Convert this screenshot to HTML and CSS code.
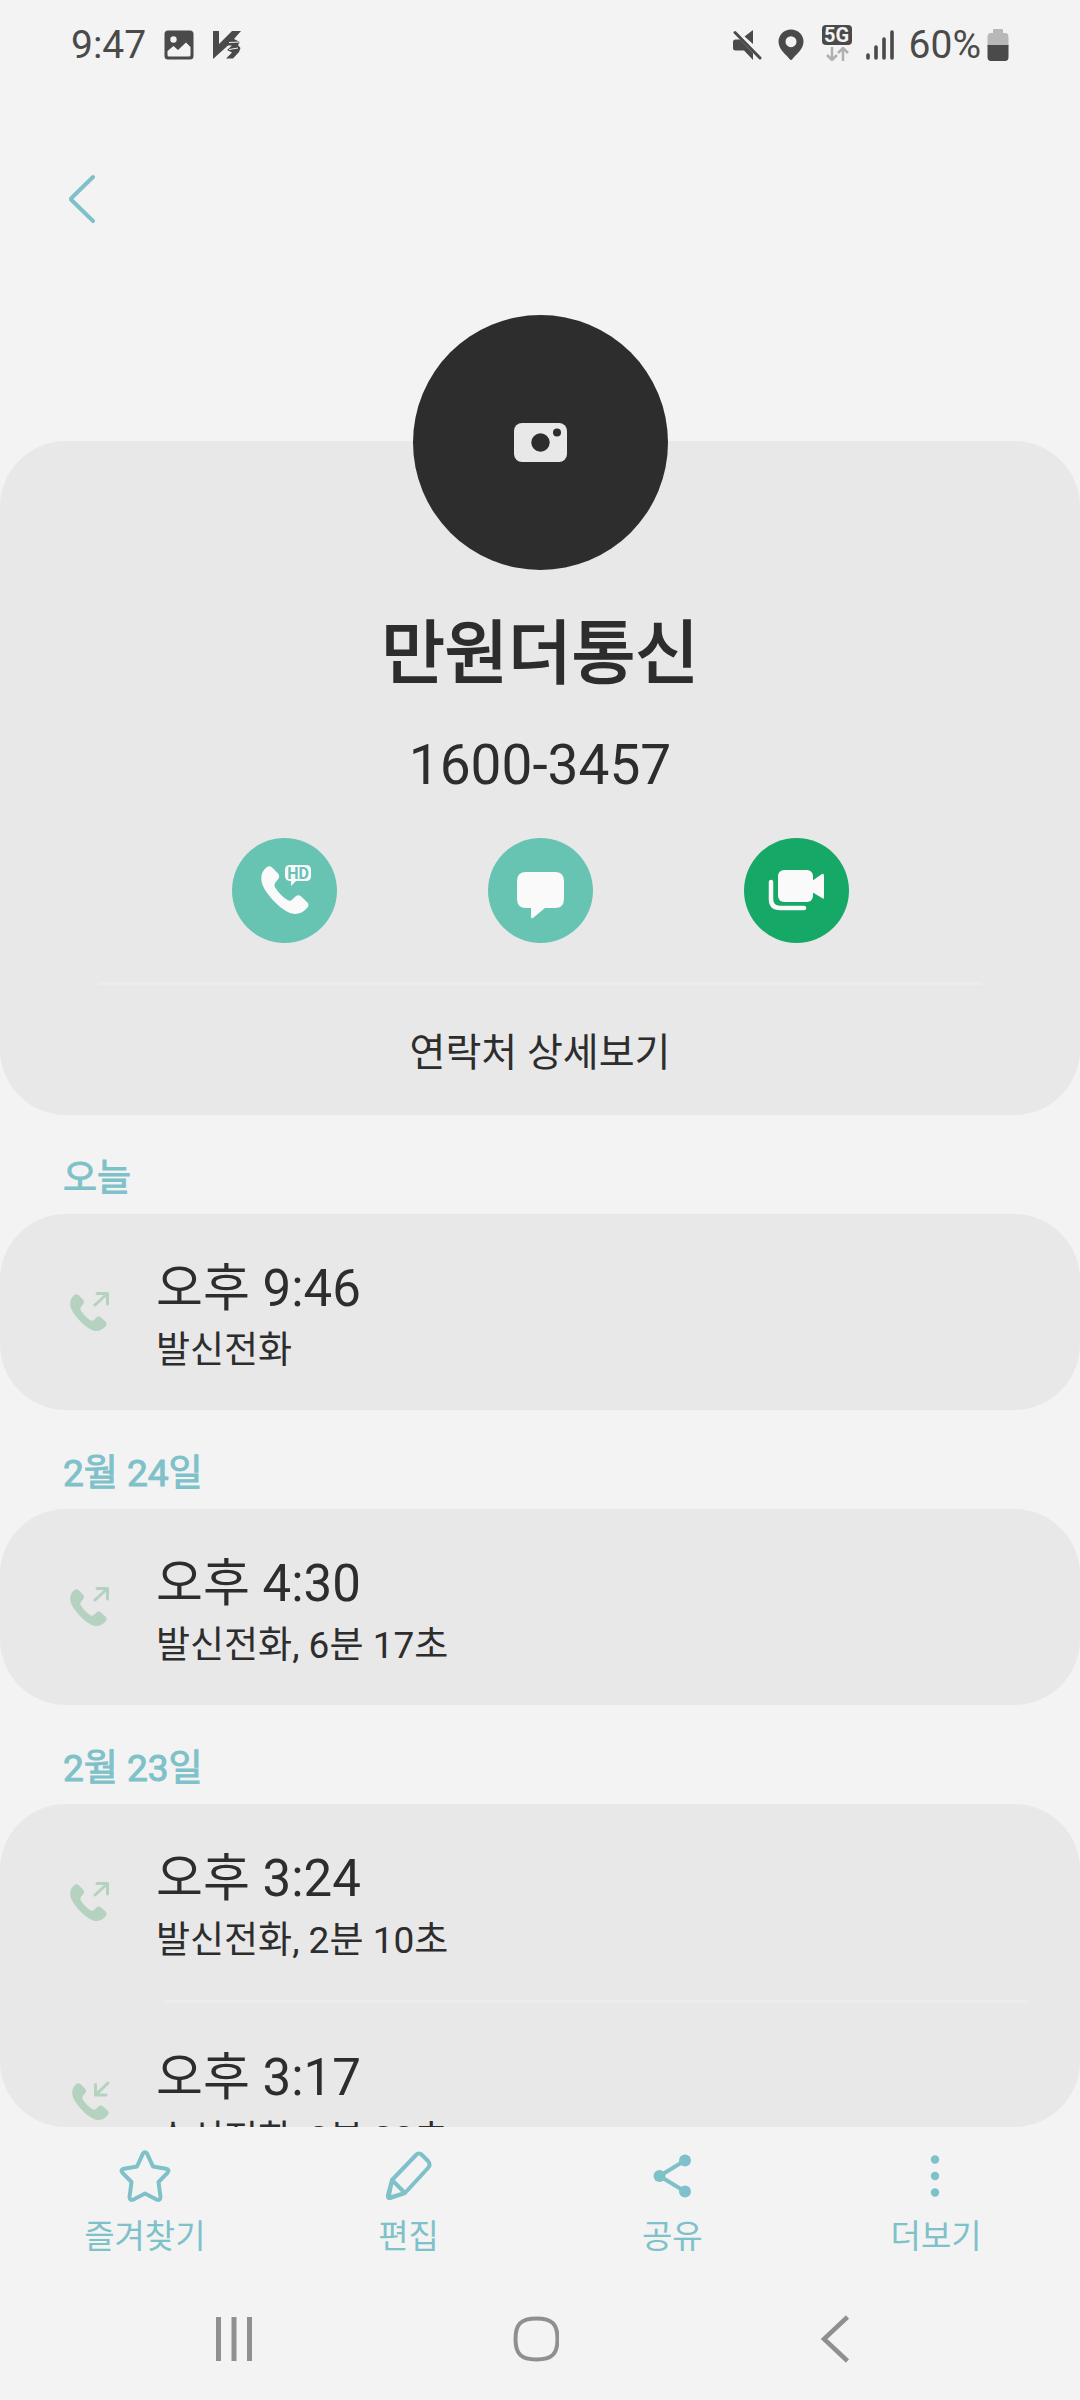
FILE: index.html
```html
<!DOCTYPE html>
<html lang="ko">
<head>
    <meta charset="UTF-8">
    <meta name="viewport" content="width=device-width, initial-scale=1.0">
    <title>통화 기록</title>
    <link rel="stylesheet" href="styles.css">
</head>
<body>

<!-- 공용 아이콘 -->
<svg class="icon-defs" aria-hidden="true">
    <symbol id="icon-handset" viewBox="0 0 38 38">
        <path d="M4.500 1C6 0 7.500 0 9 1.300L13.500 6C14.800 7.500 14.600 9 13.600 10.300L11.300 13.200C10.300 14.600 10.500 15.800 11.500 17.500C13.800 21.300 17.500 25 21 27C22.300 27.700 23.600 27.600 24.800 26.500L27.500 24C28.800 22.900 30.300 22.900 31.600 24L36.600 28.600C37.900 30 37.800 31.500 36.800 32.800C33.500 37 29 38.600 24.500 37.700C17 36 4 23 1 14.500C-.8 9 .5 4 4.500 1Z" fill="currentColor"/>
    </symbol>
    <symbol id="icon-outgoing" viewBox="0 0 40 40">
        <use href="#icon-handset" x="0" y="2" width="37" height="37"/>
        <path d="M25 13L37 2M27 1.500H37.500V12" fill="none" stroke="currentColor" stroke-width="3" stroke-linecap="round" stroke-linejoin="round"/>
    </symbol>
    <symbol id="icon-incoming" viewBox="0 0 40 40">
        <use href="#icon-handset" x="2" y="2" width="37" height="37"/>
        <path d="M38 2L26 13.500M25.500 3.500V14H36" fill="none" stroke="currentColor" stroke-width="3" stroke-linecap="round" stroke-linejoin="round"/>
    </symbol>
</svg>

<div class="screen">

    <!-- 상태 표시줄 -->
    <div class="status-bar">
        <div class="status-left">
            <span>9:47</span>
            <svg width="30" height="30" viewBox="0 0 30 30">
                <path fill="#4a4a4a" fill-rule="evenodd" d="M4 .5H26Q29.500 .5 29.500 4V26Q29.500 29.500 26 29.500H4Q.5 29.500 .5 26V4Q.5 .5 4 .5ZM9.500 6.300A3.200 3.200 0 1 0 9.500 12.700A3.200 3.200 0 1 0 9.500 6.300ZM3.500 21V25Q3.500 26.500 5 26.500H25Q26.500 26.500 26.500 25V17L22 12.500L14 20L9.500 16Z"/>
            </svg>
            <svg width="30" height="30" viewBox="0 0 30 30">
                <path fill="#4a4a4a" d="M1 1H7V14L20 1H29L22 9L28 12L26 15L28.500 18L27 22L21 28.500H14L20 22.500L15 20L20 15.500H16L1 29Z"/>
                <path d="M17 12.500L28 12M17 19.500L26 18" stroke="#f3f3f3" stroke-width="1"/>
            </svg>
        </div>
        <div class="status-right">
            <svg width="30" height="30" viewBox="0 0 30 30">
                <path fill="#4a4a4a" d="M1 12Q1 9.500 3.500 9.500H8L21 23V30L12 20.500H3.500Q1 20.500 1 18ZM21 0V14L12.500 6.500Z"/>
                <path d="M3 2.500L28 28" stroke="#4a4a4a" stroke-width="3" stroke-linecap="round"/>
            </svg>
            <svg class="status-pin" width="26" height="32" viewBox="0 0 26 32">
                <path fill="#4a4a4a" fill-rule="evenodd" d="M13 .5C6 .5 .5 6 .5 12.500C.5 21 9 26 11.500 30Q13 32 14.500 30C17 26 25.500 21 25.500 12.500C25.500 6 20 .5 13 .5ZM13 7.200A5.500 5.500 0 1 1 13 18.200A5.500 5.500 0 1 1 13 7.200Z"/>
            </svg>
            <div class="network">
                <span class="network-type">5G</span>
                <svg width="24" height="14" viewBox="0 0 24 14">
                    <path d="M7 0V12M2 8L7 13L12 8M18 14V2M13 6L18 1L23 6" fill="none" stroke="#b0b0b0" stroke-width="2.500"/>
                </svg>
            </div>
            <svg class="status-signal" width="28" height="30" viewBox="0 0 28 30">
                <path d="M2 25V28M10 17V28M18 9V28M26 2V28" stroke="#4a4a4a" stroke-width="3.600" stroke-linecap="round"/>
            </svg>
            <span>60%</span>
            <svg class="status-battery" width="22" height="34" viewBox="0 0 22 34">
                <path fill="#b8b8b8" d="M6 5V2Q6 1 7 1H15Q16 1 16 2V5H18Q21.500 5 21.500 9V18H.5V9Q.5 5 4 5Z"/>
                <path fill="#4a4a4a" d="M.5 17H21.500V29Q21.500 33 18 33H4Q.5 33 .5 29Z"/>
            </svg>
        </div>
    </div>

    <header class="app-bar">
        <button class="back-btn" type="button" aria-label="뒤로">
            <svg width="28" height="50" viewBox="0 0 28 50">
                <path d="M25 3L3.500 24Q2.500 25 3.500 26L25 47" fill="none" stroke="currentColor" stroke-width="4" stroke-linecap="round"/>
            </svg>
        </button>
    </header>

    <main class="content">

        <!-- 연락처 카드 -->
        <section class="card contact-card">
            <button class="avatar" type="button" aria-label="사진 추가">
                <svg width="53" height="39" viewBox="0 0 53 39">
                    <rect width="53" height="39" rx="8" fill="#e8e8e8"/>
                    <circle cx="26.500" cy="19.500" r="9.200" fill="#2d2d2d"/>
                    <circle cx="43" cy="9.500" r="4" fill="#2d2d2d"/>
                </svg>
            </button>
            <h1 class="contact-name">만원더통신</h1>
            <p class="contact-number">1600-3457</p>
            <div class="contact-actions">
                <button class="action-btn" type="button" aria-label="HD 전화">
                    <svg width="105" height="105" viewBox="0 0 105 105">
                        <use href="#icon-handset" x="29" y="28" width="48" height="48"/>
                        <path fill="currentColor" d="M58 27H74Q79 27 79 32V38Q79 43 74 43H64L59 48V43Q53 43 53 38V32Q53 27 58 27Z"/>
                        <text class="hd-label" x="66" y="41" text-anchor="middle">HD</text>
                    </svg>
                </button>
                <button class="action-btn" type="button" aria-label="메시지">
                    <svg width="105" height="105" viewBox="0 0 105 105">
                        <path fill="currentColor" d="M38 34H67Q76 34 76 43V61Q76 70 67 70H57L45 80Q43 81 43 79V70H38Q29 70 29 61V43Q29 34 38 34Z"/>
                    </svg>
                </button>
                <button class="action-btn action-video" type="button" aria-label="영상통화">
                    <svg width="105" height="105" viewBox="0 0 105 105">
                        <rect x="34" y="32" width="35" height="32" rx="6" fill="currentColor"/>
                        <path fill="currentColor" d="M68 43L78 36Q80 35 80 38V59Q80 62 78 60L68 54Z"/>
                        <path d="M27 44V61Q27 70 36 70H60" fill="none" stroke="currentColor" stroke-width="4.500" stroke-linecap="round"/>
                    </svg>
                </button>
            </div>
            <a class="detail-link" href="#">연락처 상세보기</a>
        </section>

        <!-- 통화 목록 -->
        <h2 class="date-title">오늘</h2>
        <ul class="card call-list">
            <li class="call-item">
                <svg class="call-icon"><use href="#icon-outgoing"/></svg>
                <div class="call-info">
                    <div class="call-time">오후 9:46</div>
                    <div class="call-detail">발신전화</div>
                </div>
            </li>
        </ul>

        <h2 class="date-title">2월 24일</h2>
        <ul class="card call-list">
            <li class="call-item">
                <svg class="call-icon"><use href="#icon-outgoing"/></svg>
                <div class="call-info">
                    <div class="call-time">오후 4:30</div>
                    <div class="call-detail">발신전화, 6분 17초</div>
                </div>
            </li>
        </ul>

        <h2 class="date-title">2월 23일</h2>
        <ul class="card call-list">
            <li class="call-item">
                <svg class="call-icon"><use href="#icon-outgoing"/></svg>
                <div class="call-info">
                    <div class="call-time">오후 3:24</div>
                    <div class="call-detail">발신전화, 2분 10초</div>
                </div>
            </li>
            <li class="call-item">
                <svg class="call-icon"><use href="#icon-incoming"/></svg>
                <div class="call-info">
                    <div class="call-time">오후 3:17</div>
                    <div class="call-detail">수신전화, 2분 22초</div>
                </div>
            </li>
        </ul>
    </main>

    <!-- 하단 메뉴 -->
    <div class="toolbar">
        <button class="tool-btn" type="button">
            <svg width="52" height="52" viewBox="0 0 52 52">
                <path d="M23.800 3.800Q26 .8 28.200 3.800L34 16.500L47 18.700Q51 19.800 48.500 22.800L39.500 32L41.500 47Q41.300 51 37.500 49.500L26 43.500L14.500 49.500Q10.700 51 10.500 47L12.500 32L3.500 22.800Q1 19.800 5 18.700L18 16.500Z" fill="none" stroke="currentColor" stroke-width="4" stroke-linejoin="round"/>
            </svg>
            즐겨찾기
        </button>
        <button class="tool-btn" type="button">
            <svg width="52" height="52" viewBox="0 0 52 52">
                <path d="M9 30L33 5Q36 2 39 5L45 11Q48 14.500 45 18L22 43L5.500 48ZM9 30L22 43M9 30L5 45Q4.500 48.500 7 48L22 43" fill="none" stroke="currentColor" stroke-width="4" stroke-linejoin="round"/>
            </svg>
            편집
        </button>
        <button class="tool-btn" type="button">
            <svg width="52" height="52" viewBox="0 0 52 52">
                <path d="M39 10.500L13.500 26L39 41.500" fill="none" stroke="currentColor" stroke-width="4"/>
                <circle cx="39" cy="10.500" r="6" fill="currentColor"/>
                <circle cx="13.500" cy="26" r="6" fill="currentColor"/>
                <circle cx="39" cy="41.500" r="6" fill="currentColor"/>
            </svg>
            공유
        </button>
        <button class="tool-btn" type="button">
            <svg width="52" height="52" viewBox="0 0 52 52">
                <circle cx="25" cy="9.500" r="4.200" fill="currentColor"/>
                <circle cx="25" cy="26" r="4.200" fill="currentColor"/>
                <circle cx="25" cy="42.500" r="4.200" fill="currentColor"/>
            </svg>
            더보기
        </button>
    </div>

    <!-- 내비게이션 바 -->
    <nav class="nav-bar">
        <button class="nav-btn" type="button" aria-label="최근 앱">
            <svg width="50" height="50" viewBox="0 0 50 50">
                <path d="M9.500 3V47M25 3V47M40.500 3V47" stroke="currentColor" stroke-width="5"/>
            </svg>
        </button>
        <button class="nav-btn" type="button" aria-label="홈">
            <svg width="50" height="50" viewBox="0 0 50 50">
                <path d="M27.500 4.500C43 4.500 48.500 10 48.500 25S43 45.500 27.500 45.500S6.500 40 6.500 25S12 4.500 27.500 4.500Z" fill="none" stroke="currentColor" stroke-width="4"/>
            </svg>
        </button>
        <button class="nav-btn" type="button" aria-label="뒤로">
            <svg width="50" height="50" viewBox="0 0 50 50">
                <path d="M38.500 3L15 25L38.500 47" fill="none" stroke="currentColor" stroke-width="4.500"/>
            </svg>
        </button>
    </nav>
</div>

</body>
</html>
```

FILE: styles.css
```css
* {
    box-sizing: border-box;
}

body {
    margin: 0;
    background-color: #f3f3f3;
    color: #2d2d2d;
    font-family: Roboto, 'Noto Sans CJK KR', sans-serif;
}

h1, h2, p, ul {
    margin: 0;
    padding: 0;
}

button {
    padding: 0;
    border: none;
    background: none;
    color: inherit;
    font-family: inherit;
    cursor: pointer;
}

svg {
    display: block;
    flex-shrink: 0;
}

.icon-defs {
    position: absolute;
    width: 0;
    height: 0;
}

.screen {
    display: flex;
    flex-direction: column;
    height: 100vh;
}

/* 상태 표시줄 */
.status-bar {
    display: flex;
    justify-content: space-between;
    align-items: center;
    flex-shrink: 0;
    height: 90px;
    padding: 0 71px;
    color: #4a4a4a;
    font-size: 39px;
    line-height: 40px;
}

.status-left,
.status-right {
    display: flex;
    align-items: center;
}

.status-left {
    gap: 18px;
}

.status-pin {
    margin-left: 16px;
}

.network {
    display: flex;
    flex-direction: column;
    align-items: center;
    gap: 2px;
    margin: 0 14px 4px 18px;
}

.network-type {
    width: 30px;
    border-radius: 4px;
    background-color: #4a4a4a;
    color: #f3f3f3;
    font-size: 20px;
    font-weight: bold;
    line-height: 20px;
    text-align: center;
}

.status-signal {
    margin-right: 15px;
}

.status-battery {
    margin-left: 6px;
}

/* 상단 바 */
.app-bar {
    display: flex;
    align-items: center;
    flex-shrink: 0;
    height: 216px;
    padding: 0 68px;
}

.back-btn {
    align-self: flex-start;
    margin-top: 84px;
    color: #7fc1c9;
}

/* 본문 */
.content {
    flex: 1;
    min-height: 0;
    padding-top: 135px;
    overflow: hidden;
    border-radius: 0 0 66px 66px;
}

.card {
    border-radius: 66px;
    background-color: #e8e8e8;
}

.contact-card {
    display: flex;
    flex-direction: column;
    align-items: center;
}

.avatar {
    display: flex;
    justify-content: center;
    align-items: center;
    width: 255px;
    height: 255px;
    margin-top: -126px;
    border-radius: 50%;
    background-color: #2d2d2d;
}

.contact-name {
    margin-top: 35px;
    font-size: 69px;
    font-weight: 400;
    line-height: 100px;
    -webkit-text-stroke: 2px;
}

.contact-number {
    margin-top: 22px;
    font-size: 55px;
    line-height: 76px;
}

.contact-actions {
    display: flex;
    gap: 151px;
    margin-top: 35px;
}

.action-btn {
    width: 105px;
    height: 105px;
    border-radius: 50%;
    background-color: #67c3b2;
    color: #fafafa;
}

.action-video {
    background-color: #16a866;
}

.hd-label {
    fill: #67c3b2;
    font-size: 16px;
    font-weight: 700;
}

.detail-link {
    align-self: stretch;
    margin: 39px 98px 0;
    padding-top: 6px;
    border-top: 3px solid #ececec;
    color: inherit;
    font-size: 39px;
    line-height: 124px;
    text-align: center;
    text-decoration: none;
}

/* 통화 목록 */
.date-title {
    padding: 39px 63px 10px;
    color: #7fc1c9;
    font-size: 37px;
    font-weight: 400;
    line-height: 50px;
    -webkit-text-stroke: 1px;
}

.call-list {
    list-style: none;
}

.call-item {
    display: flex;
    align-items: center;
    gap: 46px;
    height: 196px;
    padding: 0 53px 0 70px;
}

.call-item + .call-item {
    position: relative;
    margin-top: 3px;
}

.call-item + .call-item::before {
    content: '';
    position: absolute;
    top: -3px;
    left: 163px;
    right: 53px;
    height: 3px;
    background-color: #ececec;
}

.call-icon {
    width: 40px;
    height: 40px;
    color: #b5d1bf;
}

.call-info {
    padding-top: 12px;
}

.call-time {
    font-size: 51px;
    line-height: 66px;
}

.call-detail {
    font-size: 37px;
    line-height: 58px;
}

/* 하단 메뉴 */
.toolbar {
    display: flex;
    flex-shrink: 0;
    padding: 23px 12px 0 13px;
}

.tool-btn {
    display: flex;
    flex: 1;
    flex-direction: column;
    align-items: center;
    gap: 11px;
    color: #7fc1c9;
    font-size: 33px;
    line-height: 48px;
}

.nav-bar {
    display: flex;
    flex-shrink: 0;
    padding: 53px 96px 36px 84px;
}

.nav-btn {
    display: flex;
    flex: 1;
    justify-content: center;
    color: #8f8f8f;
}
```
